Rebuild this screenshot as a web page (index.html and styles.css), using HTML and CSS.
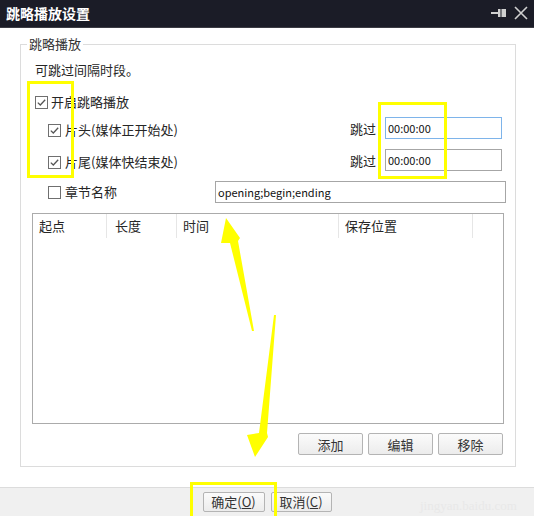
FILE: index.html
```html
<!DOCTYPE html>
<html lang="zh-CN">
<head>
<meta charset="utf-8">
<title>跳略播放设置</title>
<link rel="stylesheet" href="styles.css">
</head>
<body>
<div class="window">
  <div class="titlebar">
    <span class="title">跳略播放设置</span>
    <span class="tb-icons">
      <svg class="pin" width="16" height="10" viewBox="0 0 16 10"><path d="M0 5H7" stroke="#d0d0d0" stroke-width="2"/><path d="M7 1H15V9H7Z" fill="#d0d0d0"/><path d="M10 1V9" stroke="#1b1c27" stroke-width="1"/></svg>
      <svg class="close" width="14" height="14" viewBox="0 0 14 14"><path d="M1 1L13 13M13 1L1 13" stroke="#d0d0d0" stroke-width="1.6"/></svg>
    </span>
  </div>
  <div class="main">
    <fieldset class="group">
      <legend>跳略播放</legend>
      <div class="desc">可跳过间隔时段。</div>
      <div class="row first">
        <label class="chk"><svg width="13" height="13" viewBox="0 0 13 13"><rect x="0.5" y="0.5" width="12" height="12" fill="#fff" stroke="#6f6f6f"/><path d="M2.8 6.6L5.3 9L10.2 3.8" fill="none" stroke="#555" stroke-width="1.3"/></svg><span>开启跳略播放</span></label>
      </div>
      <div class="row sub skip">
        <label class="chk"><svg width="13" height="13" viewBox="0 0 13 13"><rect x="0.5" y="0.5" width="12" height="12" fill="#fff" stroke="#6f6f6f"/><path d="M2.8 6.6L5.3 9L10.2 3.8" fill="none" stroke="#555" stroke-width="1.3"/></svg><span>片头(媒体正开始处)</span></label>
        <span class="skiplbl">跳过</span>
        <div class="input time focus">00:00:00</div>
      </div>
      <div class="row sub skip gap">
        <label class="chk"><svg width="13" height="13" viewBox="0 0 13 13"><rect x="0.5" y="0.5" width="12" height="12" fill="#fff" stroke="#6f6f6f"/><path d="M2.8 6.6L5.3 9L10.2 3.8" fill="none" stroke="#555" stroke-width="1.3"/></svg><span>片尾(媒体快结束处)</span></label>
        <span class="skiplbl">跳过</span>
        <div class="input time">00:00:00</div>
      </div>
      <div class="row sub gap">
        <label class="chk"><svg width="13" height="13" viewBox="0 0 13 13"><rect x="0.5" y="0.5" width="12" height="12" fill="#fff" stroke="#6f6f6f"/></svg><span>章节名称</span></label>
        <div class="input chapter">opening;begin;ending</div>
      </div>
      <div class="list">
        <div class="list-head">
          <div class="col c1">起点</div>
          <div class="col c2">长度</div>
          <div class="col c3">时间</div>
          <div class="col c4">保存位置</div>
        </div>
      </div>
      <div class="actions">
        <button class="btn">添加</button>
        <button class="btn">编辑</button>
        <button class="btn">移除</button>
      </div>
    </fieldset>
  </div>
  <div class="footer">
    <button class="btn fbtn ok">确定(<u>O</u>)</button>
    <button class="btn fbtn cancel">取消(<u>C</u>)</button>
  </div>
</div>

<div class="watermark">jingyan.baidu.com</div>

<div class="mark m1"></div>
<div class="mark m2"></div>
<div class="mark m3"></div>
<svg class="arrows" width="534" height="516" viewBox="0 0 534 516">
  <polygon points="226,218 240,238 238,241 254,331 252,331 230,243 221,243" fill="#ffff00"/>
  <polygon points="276,315 267,433 268,437 255,457 247,435 259,433 274,315" fill="#ffff00"/>
</svg>
</body>
</html>
```

FILE: styles.css
```css
* { box-sizing: border-box; }

body {
  margin: 0;
  width: 534px;
  height: 516px;
  overflow: hidden;
  position: relative;
  background: #fff;
  font-family: "Noto Sans CJK SC", "Microsoft YaHei", sans-serif;
  font-size: 13px;
  color: #262626;
}

.window {
  display: flex;
  flex-direction: column;
  height: 516px;
}

.titlebar {
  height: 28px;
  flex: none;
  background: #1b1c27;
  border-bottom: 1px solid #3c3c44;
  display: flex;
  align-items: center;
  justify-content: space-between;
  padding: 0 6px 1px 6px;
}

.title {
  color: #fff;
  font-weight: bold;
  font-size: 14px;
  line-height: 18px;
}

.tb-icons {
  display: flex;
  align-items: center;
  gap: 7px;
}

.main {
  flex: 1;
  padding: 7px 18px 0 20px;
}

.group {
  margin: 0;
  padding: 8px 11px 11px 11px;
  border: 1px solid #dcdcdc;
  min-width: 0;
}

.group legend {
  padding: 0 2px;
  margin-left: -5px;
  line-height: 18px;
  color: #333;
}

.desc {
  line-height: 18px;
  margin-left: 3px;
}

.row {
  display: flex;
  align-items: center;
  height: 22px;
}

.row.first {
  margin-top: 12px;
  margin-left: 3px;
}

.row.sub {
  margin-left: 16px;
  margin-top: 4px;
}

.row.sub.gap {
  margin-top: 10px;
}

.chk {
  display: flex;
  align-items: center;
  gap: 3px;
  line-height: 18px;
}

.row.sub .chk { gap: 4px; }

.row.skip .chk {
  margin-top: 4px;
}

.chk svg { display: block; }

.skiplbl {
  margin-left: auto;
}

.input {
  height: 22px;
  border: 1px solid #a6a6a6;
  background: #fff;
  display: flex;
  align-items: center;
  padding-left: 2px;
  font-size: 11px;
  color: #111;
}

.input.time {
  width: 117px;
  margin-left: 9px;
  margin-right: 2px;
}

.input.focus {
  border-color: #7eb4ea;
}

.input.chapter {
  width: 291px;
  margin-left: auto;
  margin-right: -2px;
}

.list {
  margin-top: 10px;
  height: 211px;
  border: 1px solid #ababab;
}

.list-head {
  display: flex;
  height: 24px;
}

.col {
  border-right: 1px solid #e6e6e6;
  padding-left: 6px;
  line-height: 24px;
}

.c1 { width: 74px; }
.c2 { width: 70px; padding-left: 8px; }
.c3 { width: 162px; }
.c4 { width: 134px; }

.actions {
  margin-top: 9px;
  display: flex;
  justify-content: flex-end;
  gap: 5px;
  margin-right: 1px;
}

.btn {
  font-family: inherit;
  font-size: 13px;
  color: #333;
  width: 65px;
  height: 22px;
  padding: 0;
  border: 1px solid #b4b4b4;
  border-radius: 2px;
  background: linear-gradient(#fbfbfb, #ececec);
}

.footer {
  height: 29px;
  flex: none;
  background: #f0f0f0;
  border-top: 1px solid #dcdcdc;
  display: flex;
  justify-content: center;
  gap: 6px;
  padding-top: 4px;
}

.fbtn {
  height: 20px;
  line-height: 18px;
}

.fbtn.ok { width: 62px; }
.fbtn.cancel { width: 61px; }

.watermark {
  position: absolute;
  left: 420px;
  top: 498px;
  font-family: "Liberation Serif", serif;
  font-size: 13px;
  color: #e8e8e8;
}

.mark {
  position: absolute;
  border: 3px solid #ffff00;
}

.m1 { left: 27px; top: 81px; width: 47px; height: 97px; }
.m2 { left: 378px; top: 102px; width: 69px; height: 77px; }
.m3 { left: 190px; top: 482px; width: 87px; height: 40px; }

.arrows {
  position: absolute;
  left: 0;
  top: 0;
  pointer-events: none;
}
```
